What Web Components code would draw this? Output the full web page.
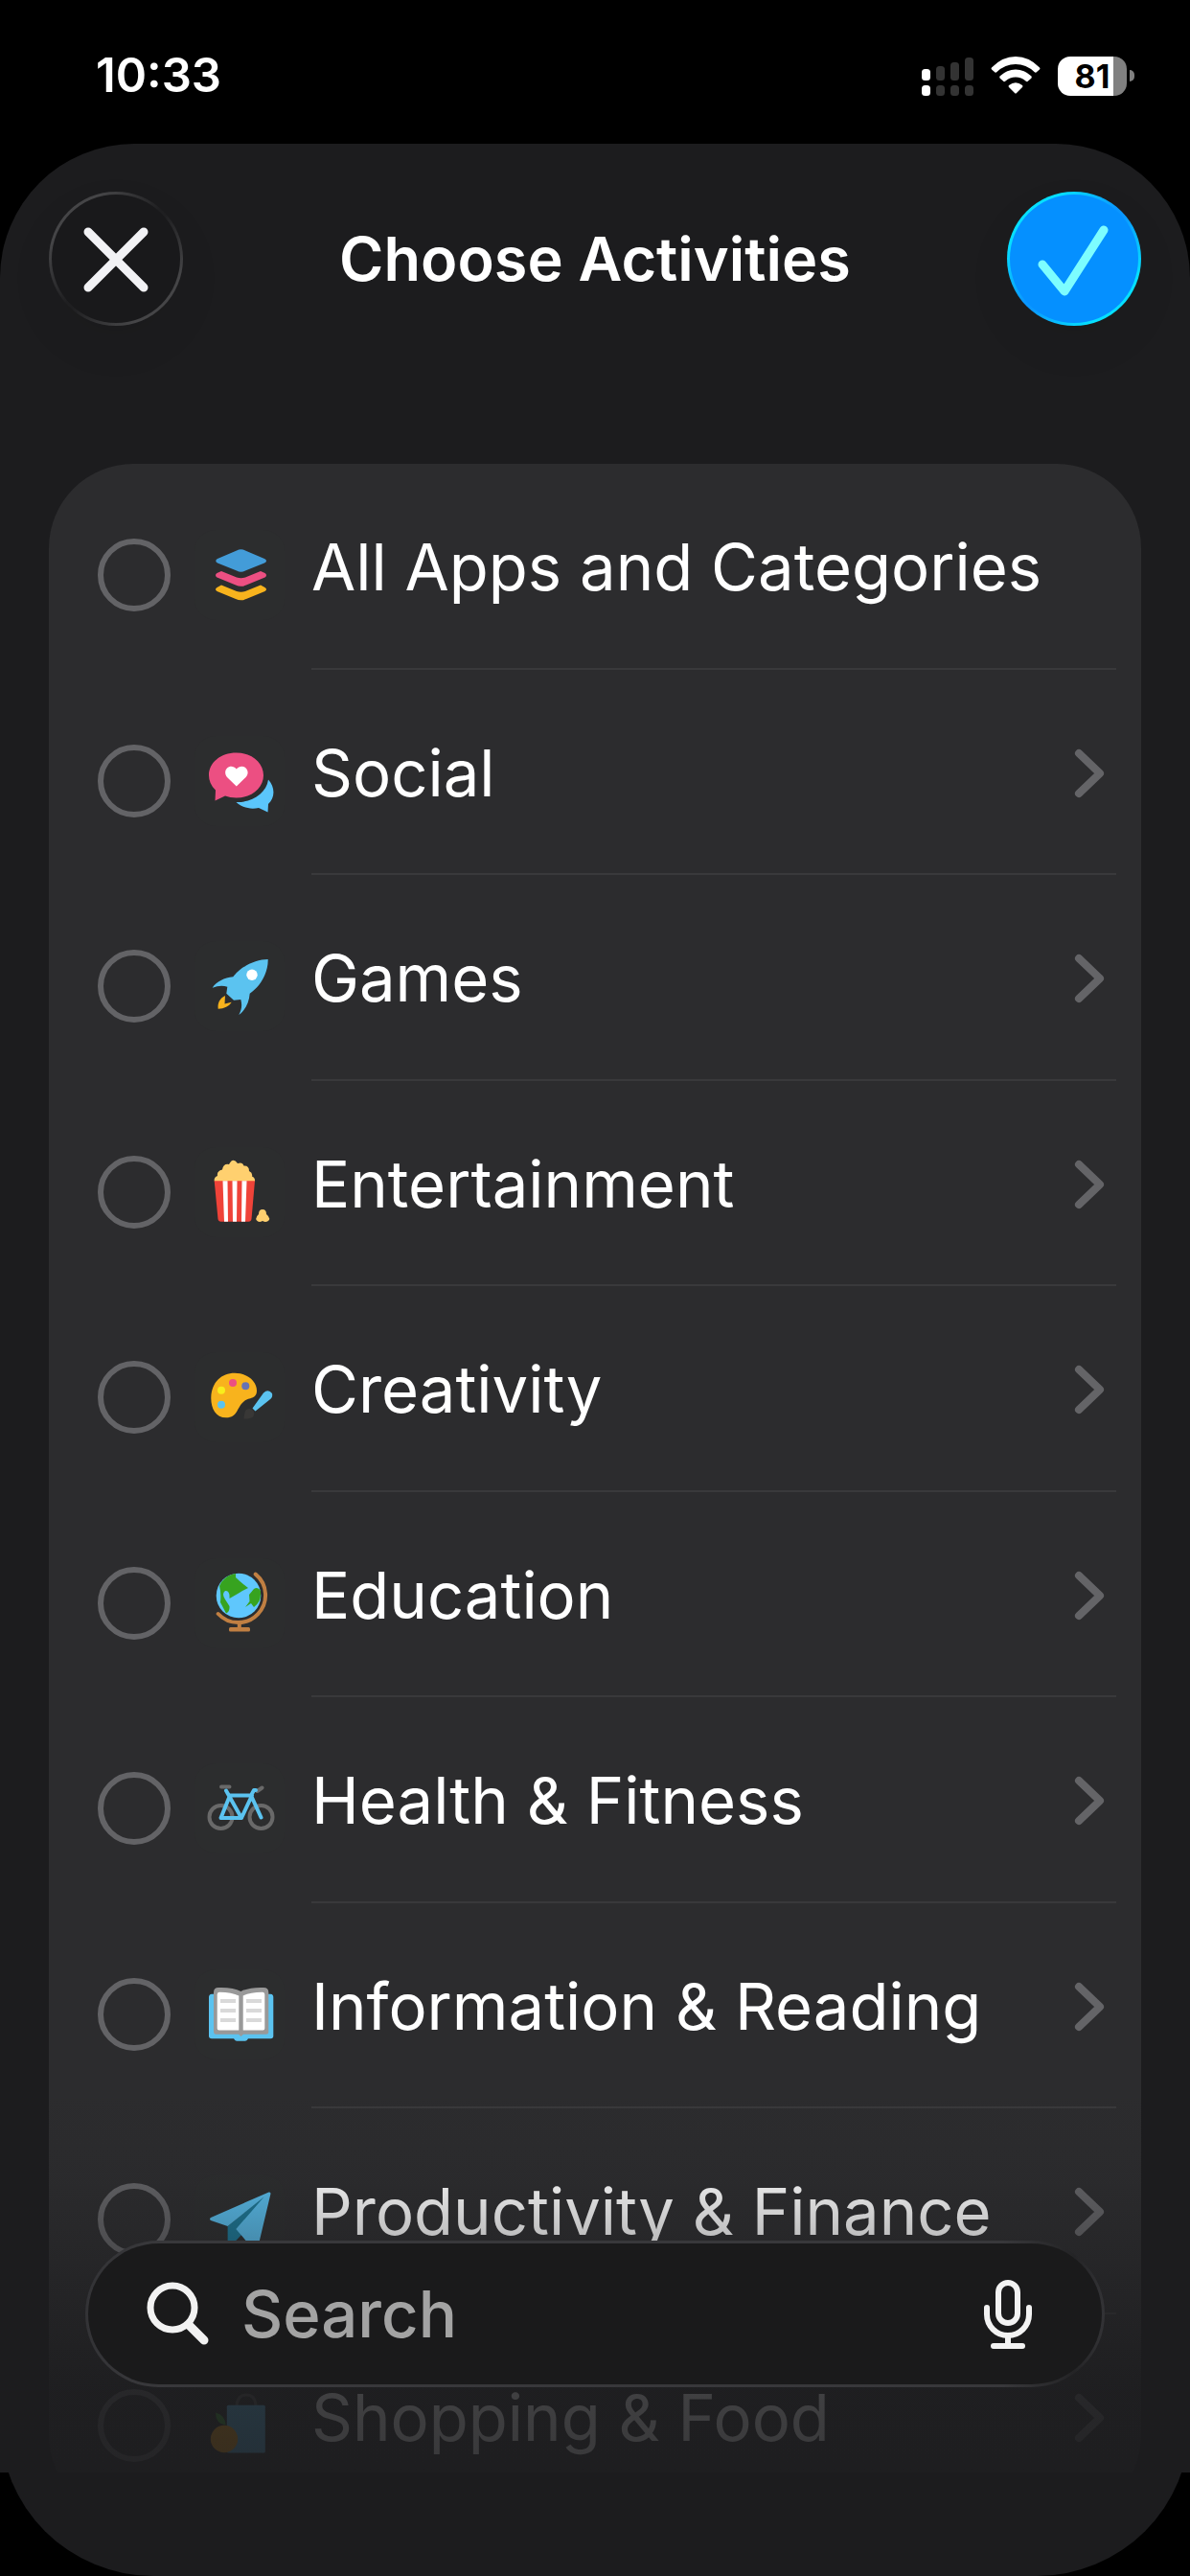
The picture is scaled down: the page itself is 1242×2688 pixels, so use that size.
<!DOCTYPE html>
<html lang="en">
<head>
<meta charset="utf-8">
<meta name="viewport" content="width=device-width, initial-scale=1">
<title>Choose Activities</title>
<style>
  body {
    margin: 0;
    height: 100vh;
    display: flex;
    flex-direction: column;
    background: #000;
    color: #fff;
    font-family: Inter, "Liberation Sans", sans-serif;
  }
</style>
</head>
<body>

<status-bar time="10:33" battery="81"></status-bar>

<activity-sheet>
  <glass-button slot="start" label="Close">
    <svg viewBox="0 0 140 140" width="140" height="140" fill="none" stroke="#f2f2f5" stroke-width="9" stroke-linecap="round">
      <path d="M41 42 L99 100 M99 42 L41 100"/>
    </svg>
  </glass-button>
  <span slot="title">Choose Activities</span>
  <glass-button slot="end" label="Done" tone="accent">
    <svg viewBox="0 0 140 140" width="140" height="140" fill="none" stroke="#7dfdff" stroke-width="9" stroke-linecap="round" stroke-linejoin="round">
      <path d="M37 76 L60 104 L101 40"/>
    </svg>
  </glass-button>

  <activity-row icon="all" leaf>All Apps and Categories</activity-row>
  <activity-row icon="social">Social</activity-row>
  <activity-row icon="games">Games</activity-row>
  <activity-row icon="entertainment">Entertainment</activity-row>
  <activity-row icon="creativity">Creativity</activity-row>
  <activity-row icon="education">Education</activity-row>
  <activity-row icon="health">Health &amp; Fitness</activity-row>
  <activity-row icon="reading">Information &amp; Reading</activity-row>
  <activity-row icon="finance">Productivity &amp; Finance</activity-row>
  <activity-row icon="shopping">Shopping &amp; Food</activity-row>

  <search-field slot="search"></search-field>
</activity-sheet>

<script>
  // Category artwork, drawn on a 94 x 94 tile
  const ICONS = {
    all: `
      <path fill="#439cd8" d="M44 21.500 Q48.500 19 53 21.500 L73 30 Q77 32 73 34.500 L53 42.500 Q48.500 45 44 42.500 L24 34.500 Q20.500 32 24 30Z"/>
      <path fill="#ec4f82" d="M23.500 45 L28 43 L44 49.500 Q48.500 51 53 49.500 L69 43 L73.500 45 Q76.500 47 73.500 49.500 L54 57.500 Q48.500 60 43 57.500 L23.500 49.500 Q20.500 47 23.500 45Z"/>
      <path fill="#f8b31d" d="M23.500 60 L28 57.500 L44 64 Q48.500 65.500 53 64 L69 57.500 L73.500 60 Q76.500 62 73.500 64 L54 72 Q48.500 74.500 43 72 L23.500 64 Q20.500 62 23.500 60Z"/>`,
    social: `
      <path fill="#5bc6fb" d="M77 45.500 C84 53 84.500 64 77 71 L76.500 79.500 L67 75 C58 77 49 74.500 43.500 69 C60 69.500 75 60 77 45.500Z"/>
      <path fill="#ec4f82" d="M43.700 17.500 C60 17.500 72 28 72 41 C72 54 60 64.500 43.700 64.500 Q37 64.500 32 62.500 L21.500 67.500 L22 56.500 Q15 50 15 41 C15 28 27 17.500 43.700 17.500Z"/>
      <path fill="#fff" d="M43.800 52.500 L34 43 C28 35 38 27.500 43.800 34.500 C49.600 27.500 60 35 53.600 43Z"/>`,
    games: `
      <path fill="#5bc3f0" d="M76.700 19 C64 19 49 26 40.300 37.300 C31 38.500 23 42 18.700 48.700 Q27 45.500 34.300 47.700 L33.300 54.700 L41 61.700 L48.300 61 C50 67 49 72 46.300 77 C53 72 57 64 57.700 54.700 C69 47 77 33 76.700 19Z"/>
      <circle cx="60" cy="35.300" r="5.700" fill="#fff"/>
      <path fill="#f8b31d" d="M32 57 C26 60 24 65 24.700 70.700 C31 70.500 36 68 38.700 63.700 L31.500 65.500Z"/>`,
    entertainment: `
      <path fill="#ffd06f" d="M21 36 Q19.500 32 24 30 Q23 25 29 23.500 Q30 17 36 18 Q40 10 45 17 Q50 15 51.500 19.500 Q57 19 57 25 Q61 27 60 30.500 Q63.500 32 63 36Z"/>
      <path fill="#ef4339" d="M20.700 35.200 H63 L59.500 75 Q59 77.800 56.500 77.800 H27.500 Q25 77.800 24.500 75Z"/>
      <path fill="#fff" d="M29.500 35.200 H34.500 L35 77.800 H31Z M39.500 35.200 H44.500 L44 77.800 H40Z M49.500 35.200 H54.500 L53 77.800 H49Z"/>
      <path fill="#ffd06f" d="M67 70 Q67 65 71 65 Q75 65 75 70 Q79 73 78 76 Q75 79.500 71 77 Q67 79.500 64.500 76 Q63.500 73 67 70Z"/>`,
    creativity: `
      <path fill="#f8b31d" d="M17.300 47.300 C18 31 28 21.700 42 21.700 C55 21.700 65 30 65 40 C65 49 57 47 52 51 C44 57 45.500 68.300 33 68.300 C22 68.300 17 58 17.300 47.300Z"/>
      <circle cx="28" cy="39.700" r="4" fill="#f9ee1c"/>
      <circle cx="40" cy="32" r="4" fill="#ec4f82"/>
      <circle cx="53.300" cy="35.300" r="4" fill="#6773b4"/>
      <circle cx="28" cy="54.700" r="4" fill="#5bc3f0"/>
      <path fill="#383736" d="M51.500 69.500 Q52 62 54 60 Q59 57 62 62 Q64 70 51.500 69.500Z"/>
      <path fill="#5bc3f0" d="M60.500 58.500 L72 42.500 Q77 38 81 43 Q82 47 78.500 49.500 L63.500 61.500Z"/>`,
    education: `
      <circle cx="46" cy="39" r="23.300" fill="#5fc7fd"/>
      <path fill="#37a31f" d="M43 16 Q34 17 28 25 L26 29 Q28 36 27 46 L33 57.500 Q37 56 36.500 50 L32 43 Q28 37 32 34 Q37 33 36.500 42 L46 36.500 L50 34 L56 31 Q48 25 43 20Z M69 34 Q66 29 62 32 L57 38 L57.500 45 L53 51 L59 47 L62 51 Q69 46 69 38Z"/>
      <path fill="none" stroke="#c07f42" stroke-width="4" stroke-linecap="round" d="M63.700 16.600 A28.500 28.500 0 1 1 24.700 58 M46.800 67 V74"/>
      <rect x="36" y="72" width="22" height="4.500" rx="1.500" fill="#c07f42"/>`,
    health: `
      <g fill="none" stroke-linecap="round" stroke-linejoin="round" stroke-width="4">
        <g stroke="#696969"><circle cx="27.500" cy="56" r="12"/><circle cx="69.500" cy="56" r="12"/><path d="M28 24.500 H36.500 M65.500 29 L70.500 25.500"/></g>
        <path stroke="#5bc3f0" d="M33 28.500 L49 57 H27.500 L37 33.500 H60 L49 57 M69.500 56.500 L59 33.500 L62 28 H64"/>
      </g>`,
    reading: `
      <path fill="#5bc3f0" d="M18 25.700 H79.500 Q82.300 26 82.300 29 V69.500 Q82.300 72.300 79.500 72.300 H56 Q55 74.700 53 74.700 H44 Q42 74.700 41 72.300 H18 Q15 72.300 15 69.500 V29 Q15 26 18 25.700Z"/>
      <path fill="#999" d="M20 24 Q20 19 25 19 Q40 18.500 48.500 23 Q57 18.500 72 19 Q77.300 19 77.300 24 V65 Q77.300 67.700 75 67.700 H51 L48.500 70 L46 67.700 H22 Q20 67.700 20 65Z"/>
      <path fill="#fff" d="M23.700 26 Q24 23.700 26 23.700 Q39 23.700 46.300 27.500 V63.500 H25.500 Q23.700 63.500 23.700 61.500Z M73.300 26 Q73 23.700 71 23.700 Q58 23.700 50.700 27.500 V63.500 H71.500 Q73.300 63.500 73.300 61.500Z"/>
      <path stroke="#d9d9d9" stroke-width="4" d="M27 33 H43 M27 43 H43 M27 53 H43 M54 33 H70 M54 43 H70 M54 53 H70"/>`,
    finance: `
      <path fill="#1b7897" d="M75 21 L34.600 53.900 V78 L50 62Z"/>
      <path fill="#58bdec" d="M77.500 18.500 L17 45 Q15 46.500 17 48 L34.600 54 L72.500 23.500 L43.300 57 L63 80 Q65 81 65.500 79 L79.500 20 Q79.500 18 77.500 18.500Z"/>`,
    shopping: `
      <path fill="none" stroke="#555" stroke-width="3" d="M44 26 Q45 15 54 15 Q63 15 64 26"/>
      <rect x="33.800" y="25.800" width="40" height="49.700" rx="1.500" fill="#5bb9ea"/>
      <circle cx="31" cy="61" r="14.200" fill="#f8a61d"/>
      <path fill="#3c9d35" d="M22 33.500 Q32 36 32.500 46.500 Q22 45 22 33.500Z"/>`
  };

  class StatusBar extends HTMLElement {
    constructor() {
      super();
      this.attachShadow({ mode: 'open' });
    }

    connectedCallback() {
      this.shadowRoot.innerHTML = `
        <style>
          :host {
            flex: none;
            display: flex;
            align-items: center;
            justify-content: space-between;
            height: 150px;
            padding: 8px 58px 0 100px;
            box-sizing: border-box;
          }
          time {
            font-size: 49px;
            font-weight: 600;
            line-height: 60px;
          }
          .indicators {
            display: flex;
            align-items: center;
            gap: 18px;
          }
          svg { display: block; }
          .power {
            display: flex;
            align-items: center;
            gap: 3px;
          }
          .battery {
            width: 72px;
            line-height: 41px;
            border-radius: 13px;
            background: linear-gradient(to right, #fff 81%, #808080 81%);
            color: #000;
            font-size: 34px;
            font-weight: 700;
            text-align: center;
          }
          .nub {
            width: 5px;
            height: 12px;
            border-radius: 0 6px 6px 0;
            background: #808080;
          }
        </style>
        <time>${this.getAttribute('time')}</time>
        <div class="indicators">
          <svg width="54" height="41" viewBox="0 0 54 41" fill="#333">
            <rect x="0" y="13" width="9" height="12" rx="3.500" fill="#fff"/>
            <rect x="15" y="10" width="9" height="15" rx="3.500"/>
            <rect x="30" y="6" width="9" height="19" rx="3.500"/>
            <rect x="45" y="1" width="9" height="24" rx="3.500"/>
            <rect x="0" y="30" width="9" height="11" rx="3.500" fill="#fff"/>
            <rect x="15" y="30" width="9" height="11" rx="3.500"/>
            <rect x="30" y="30" width="9" height="11" rx="3.500"/>
            <rect x="45" y="30" width="9" height="11" rx="3.500"/>
          </svg>
          <svg width="52" height="41" viewBox="0 0 52 41" fill="#fff">
            <path d="M1 11.500 Q12 0 26 0 Q40 0 51 11.500 Q52 12.500 51 13.500 L47.500 16.500 Q46.500 17 45.500 16 Q37 8 26 8 Q15 8 6.500 16 Q5.500 17 4.500 16.500 L1 13.500 Q0 12.500 1 11.500Z"/>
            <path d="M9.500 20.500 Q17 13.500 26 13.500 Q35 13.500 42.500 20.500 Q43 21.500 42.500 22.500 L38.500 26 Q37.500 26.500 36.500 25.500 Q32 21.500 26 21.500 Q20 21.500 15.500 25.500 Q14.500 26.500 13.500 26 L9.500 22.500 Q9 21.500 9.500 20.500Z"/>
            <path d="M19 30 Q26 24.500 33 30 Q34 31 33 32 L27 38 Q26 39 25 38 L19 32 Q18 31 19 30Z"/>
          </svg>
          <div class="power">
            <div class="battery">${this.getAttribute('battery')}</div>
            <div class="nub"></div>
          </div>
        </div>
      `;
    }
  }

  class GlassButton extends HTMLElement {
    constructor() {
      super();
      this.attachShadow({ mode: 'open' });
    }

    connectedCallback() {
      this.shadowRoot.innerHTML = `
        <style>
          :host {
            flex: none;
            display: block;
            --fill: #19191b;
            --bright: #454547;
            --dim: #1f1f21;
          }
          :host([tone="accent"]) {
            --fill: #0590ff;
            --bright: #06e0ff;
            --dim: #0a96ff;
          }
          button {
            display: block;
            width: 140px;
            height: 140px;
            padding: 0;
            border: 3px solid transparent;
            border-radius: 50%;
            background:
              linear-gradient(var(--fill), var(--fill)) padding-box,
              linear-gradient(135deg, var(--bright) 20%, var(--dim) 48%, var(--dim) 52%, var(--bright) 80%) border-box;
            box-shadow: 0 20px 50px rgba(0, 0, 0, 0.06);
            cursor: pointer;
          }
          ::slotted(svg) {
            display: block;
            margin: -3px;
          }
        </style>
        <button type="button" aria-label="${this.getAttribute('label')}"><slot></slot></button>
      `;
    }
  }

  class ActivityIcon extends HTMLElement {
    constructor() {
      super();
      this.attachShadow({ mode: 'open' });
    }

    connectedCallback() {
      this.shadowRoot.innerHTML = `
        <style>
          :host {
            flex: none;
            display: block;
            width: 94px;
            height: 94px;
            border-radius: 22px;
            background: #2c2d2e;
          }
          svg { display: block; }
        </style>
        <svg width="94" height="94" viewBox="0 0 94 94" aria-hidden="true">${ICONS[this.getAttribute('name')] || ''}</svg>
      `;
    }
  }

  class ActivityRow extends HTMLElement {
    constructor() {
      super();
      this.attachShadow({ mode: 'open' });
    }

    connectedCallback() {
      this.setAttribute('role', 'listitem');

      // Leaf rows have nothing to open, so they get no chevron
      const chevron = this.hasAttribute('leaf') ? '' : `
        <button type="button" aria-label="Show apps">
          <svg width="32" height="52" viewBox="0 0 32 52" fill="none" stroke="#646467" stroke-width="8" stroke-linecap="round" stroke-linejoin="round">
            <path d="M5 5 L27 26 L5 47"/>
          </svg>
        </button>`;

      this.shadowRoot.innerHTML = `
        <style>
          :host {
            display: flex;
            padding: 0 26px 0 51px;
          }
          .lead {
            display: flex;
            align-items: center;
            gap: 25px;
            padding: 18px 28px 0 0;
          }
          input {
            appearance: none;
            box-sizing: border-box;
            width: 76px;
            height: 76px;
            margin: 0;
            border: 6px solid #636366;
            border-radius: 50%;
          }
          input:checked { background: #0590ff; }
          .body {
            flex: 1;
            min-width: 0;
            display: flex;
            align-items: center;
            padding-top: 4px;
            border-bottom: 2px solid #39393b;
          }
          label {
            flex: 1;
            font-size: 67px;
            line-height: 88px;
            white-space: nowrap;
          }
          button {
            padding: 20px 12px 20px 20px;
            border: 0;
            background: none;
            cursor: pointer;
          }
          svg { display: block; }
        </style>
        <div class="lead">
          <input type="checkbox" id="pick">
          <activity-icon name="${this.getAttribute('icon')}"></activity-icon>
        </div>
        <div class="body">
          <label for="pick"><slot></slot></label>
          ${chevron}
        </div>
      `;
    }
  }

  class SearchField extends HTMLElement {
    constructor() {
      super();
      this.attachShadow({ mode: 'open' });
    }

    connectedCallback() {
      this.shadowRoot.innerHTML = `
        <style>
          :host {
            display: flex;
            align-items: center;
            box-sizing: border-box;
            height: 153px;
            padding: 0 60px;
            border: 3px solid transparent;
            border-radius: 77px;
            background:
              linear-gradient(#1a1a1b, #1a1a1b) padding-box,
              linear-gradient(to right, #333336, #38383b 6%, #38383b 90%, #242426 97%, #333336) border-box;
          }
          svg {
            flex: none;
            display: block;
          }
          input {
            flex: 1;
            min-width: 0;
            padding: 0;
            border: 0;
            outline: 0;
            background: none;
            color: #fff;
            font: 500 67px/88px Inter, "Liberation Sans", sans-serif;
            margin: 0 32px;
          }
          input::placeholder { color: #a3a3a3; }
          button {
            padding: 0;
            margin: 0 12px 0 0;
            border: 0;
            background: none;
            cursor: pointer;
          }
        </style>
        <svg width="68" height="68" viewBox="0 0 68 68" fill="none" stroke="#f2f2f2" stroke-linecap="round" aria-hidden="true">
          <circle cx="28" cy="27" r="23" stroke-width="7"/>
          <path stroke-width="9" d="M46 46 L61 61"/>
        </svg>
        <input type="text" placeholder="Search" aria-label="Search">
        <button type="button" aria-label="Dictate">
          <svg width="52" height="74" viewBox="0 0 52 74" fill="none" stroke="#f2f2f2" stroke-width="6" stroke-linecap="round">
            <rect x="16" y="4" width="20" height="42" rx="10"/>
            <path d="M4 30 V37 A22 22 0 0 0 48 37 V30 M26 59 V69 M11 70 H41"/>
          </svg>
        </button>
      `;
    }
  }

  class ActivitySheet extends HTMLElement {
    constructor() {
      super();
      this.attachShadow({ mode: 'open' });
    }

    connectedCallback() {
      this.shadowRoot.innerHTML = `
        <style>
          :host {
            flex: 1;
            min-height: 0;
            display: flex;
            flex-direction: column;
            padding-bottom: 108px;
            border-radius: 140px 140px 160px 160px;
            background: #1c1c1e;
          }
          header {
            flex: none;
            display: flex;
            align-items: center;
            justify-content: space-between;
            padding: 50px 51px 0;
          }
          h1 {
            margin: 0;
            font-size: 63px;
            font-weight: 600;
            line-height: 80px;
          }
          main {
            flex: 1;
            min-height: 0;
            position: relative;
            background: #1c1c1e;
            margin-top: 144px;
          }
          .scroller {
            height: 100%;
            overflow-y: auto;
            scrollbar-width: none;
          }
          .card {
            display: grid;
            grid-auto-rows: 1fr;
            min-height: 2145px;
            margin: 0 51px;
            border-radius: 88px;
            background: #2c2c2e;
          }
          .fade {
            position: absolute;
            left: 0;
            right: 0;
            bottom: 0;
            height: 400px;
            background: linear-gradient(
              rgba(28, 28, 30, 0),
              rgba(28, 28, 30, 0.1) 24%,
              rgba(28, 28, 30, 0.28) 38%,
              rgba(28, 28, 30, 0.84) 78%,
              rgba(28, 28, 30, 0.88)
            );
            pointer-events: none;
          }
          slot[name="search"]::slotted(*) {
            position: absolute;
            left: 89px;
            right: 89px;
            bottom: 89px;
          }
        </style>
        <header>
          <slot name="start"></slot>
          <h1><slot name="title"></slot></h1>
          <slot name="end"></slot>
        </header>
        <main>
          <div class="scroller">
            <div class="card" role="list"><slot></slot></div>
          </div>
          <div class="fade"></div>
          <slot name="search"></slot>
        </main>
      `;
    }
  }

  customElements.define('status-bar', StatusBar);
  customElements.define('glass-button', GlassButton);
  customElements.define('activity-icon', ActivityIcon);
  customElements.define('activity-row', ActivityRow);
  customElements.define('search-field', SearchField);
  customElements.define('activity-sheet', ActivitySheet);
</script>
</body>
</html>
